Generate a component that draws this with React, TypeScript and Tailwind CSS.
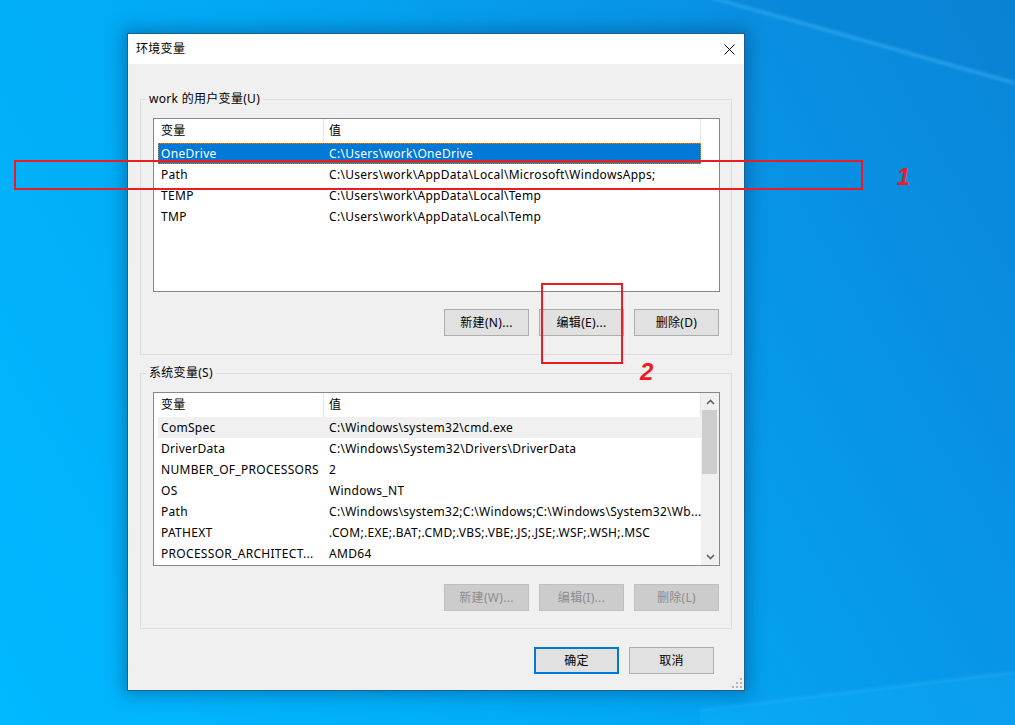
import React from "react";

type Row = [string, string];

const userVars: Row[] = [
  ["OneDrive", "C:\\Users\\work\\OneDrive"],
  ["Path", "C:\\Users\\work\\AppData\\Local\\Microsoft\\WindowsApps;"],
  ["TEMP", "C:\\Users\\work\\AppData\\Local\\Temp"],
  ["TMP", "C:\\Users\\work\\AppData\\Local\\Temp"],
];

const systemVars: Row[] = [
  ["ComSpec", "C:\\Windows\\system32\\cmd.exe"],
  ["DriverData", "C:\\Windows\\System32\\Drivers\\DriverData"],
  ["NUMBER_OF_PROCESSORS", "2"],
  ["OS", "Windows_NT"],
  ["Path", "C:\\Windows\\system32;C:\\Windows;C:\\Windows\\System32\\Wb..."],
  ["PATHEXT", ".COM;.EXE;.BAT;.CMD;.VBS;.VBE;.JS;.JSE;.WSF;.WSH;.MSC"],
  ["PROCESSOR_ARCHITECT...", "AMD64"],
];

function Chevron({ up }: { up?: boolean }) {
  return (
    <svg width="9" height="6" viewBox="0 0 9 6">
      <path
        d={up ? "M1 5 L4.5 1.5 L8 5" : "M1 1 L4.5 4.5 L8 1"}
        fill="none"
        stroke="#606060"
        strokeWidth="1.6"
      />
    </svg>
  );
}

function ScrollBar() {
  return (
    <div className="flex w-[18px] shrink-0 flex-col bg-[#f0f0f0]">
      <div className="flex h-[17px] items-center justify-center">
        <Chevron up />
      </div>
      <div className="flex-1">
        <div className="ml-[1px] h-[64px] w-[15px] bg-[#cdcdcd]" />
      </div>
      <div className="flex h-[17px] items-center justify-center">
        <Chevron />
      </div>
    </div>
  );
}

function ListView({
  rows,
  selected,
  hovered,
  scroll,
}: {
  rows: Row[];
  selected?: number;
  hovered?: number;
  scroll?: boolean;
}) {
  return (
    <div className="flex h-[174px] overflow-hidden border border-[#828790] bg-white">
      <div className="flex w-[547px] shrink-0 flex-col">
        <div className="flex h-[24px] shrink-0">
          <div className="flex w-[170px] items-center border-r border-[#e5e5e5] pl-[7px]">变量</div>
          <div className="flex w-[377px] items-center border-r border-[#e5e5e5] pl-[5px]">值</div>
        </div>
        {rows.map(([name, value], i) => {
          const sel = i === selected;
          const hov = i === hovered;
          return (
            <div
              key={name + i}
              className={`ml-[4px] flex h-[21px] w-[543px] shrink-0 items-center whitespace-nowrap ${
                sel
                  ? "bg-[#0078d7] text-white outline-1 outline-dotted -outline-offset-1 outline-[#d9822b]"
                  : hov
                  ? "bg-[#f0f0f0]"
                  : ""
              }`}
            >
              <div className="w-[165px] shrink-0 overflow-hidden pl-[3px]">{name}</div>
              <div className="overflow-hidden pl-[6px]">{value}</div>
            </div>
          );
        })}
      </div>
      {scroll && <ScrollBar />}
    </div>
  );
}

function Button({
  label,
  disabled,
  primary,
}: {
  label: string;
  disabled?: boolean;
  primary?: boolean;
}) {
  const look = disabled
    ? "border border-[#bfbfbf] bg-[#cccccc] text-[#8c8c8c]"
    : primary
    ? "border-2 border-[#0078d7] bg-[#e1e1e1]"
    : "border border-[#adadad] bg-[#e1e1e1]";
  return (
    <div className={`flex h-[27px] w-[85px] items-center justify-center ${look}`}>{label}</div>
  );
}

function Group({
  title,
  children,
  className,
}: {
  title: string;
  children: React.ReactNode;
  className?: string;
}) {
  return (
    <fieldset className={`border border-[#dcdcdc] pl-3 pr-[11px] pt-[11px] ${className ?? ""}`}>
      <legend className="ml-[-7px] h-[16px] px-[3px] leading-[16px]">{title}</legend>
      {children}
    </fieldset>
  );
}

export default function App() {
  return (
    <div className="relative h-[725px] w-[1015px] overflow-hidden bg-[linear-gradient(60deg,#00b9ff_0%,#02a8f4_45%,#0990e2_80%,#0a86d8_100%)] font-['Noto_Sans','Noto_Sans_CJK_SC',sans-serif] text-[12px] tracking-[0.3px] text-black">
      {/* wallpaper streaks */}
      <svg className="absolute inset-0" width="1015" height="725">
        <defs>
          <filter id="blur">
            <feGaussianBlur stdDeviation="1.4" />
          </filter>
        </defs>
        <polygon points="560,-45 1015,83 1015,0 560,0" fill="#0776c8" opacity="0.25" />
        <line x1="560" y1="-45" x2="1015" y2="83" stroke="#48b6f6" strokeWidth="3" opacity="0.55" filter="url(#blur)" />
        <polygon points="700,710 1015,672 1015,725 700,725" fill="#16b8ff" opacity="0.25" />
        <line x1="700" y1="710" x2="1015" y2="672" stroke="#40bcfa" strokeWidth="2.5" opacity="0.3" filter="url(#blur)" />
      </svg>

      {/* dialog window */}
      <div className="absolute left-[127px] top-[33px] flex h-[658px] w-[618px] flex-col border border-[#1f5f8b] bg-[#f0f0f0] shadow-[0_0_16px_4px_rgba(0,40,90,0.35)]">
        <div className="flex h-[30px] shrink-0 items-center justify-between bg-white pl-[8px] pr-[9px]">
          <span>环境变量</span>
          <svg width="11" height="11" viewBox="0 0 11 11">
            <path d="M0.5 0.5 L10.5 10.5 M10.5 0.5 L0.5 10.5" stroke="#000" strokeWidth="1" />
          </svg>
        </div>

        <div className="flex flex-col px-3">
          <Group title="work 的用户变量(U)" className="mt-[27px] pb-[18px]">
            <ListView rows={userVars} selected={0} />
            <div className="mt-[17px] flex justify-end gap-[10px] pr-[1px]">
              <Button label="新建(N)..." />
              <Button label="编辑(E)..." />
              <Button label="删除(D)" />
            </div>
          </Group>

          <Group title="系统变量(S)" className="mt-[10px] pb-[17px]">
            <ListView rows={systemVars} hovered={0} scroll />
            <div className="mt-[18px] flex justify-end gap-[10px] pr-[1px]">
              <Button label="新建(W)..." disabled />
              <Button label="编辑(I)..." disabled />
              <Button label="删除(L)" disabled />
            </div>
          </Group>

          <div className="mt-[18px] flex justify-end gap-[10px] pr-[18px]">
            <Button label="确定" primary />
            <Button label="取消" />
          </div>
        </div>

        {/* size grip */}
        <svg className="absolute bottom-[2px] right-[2px]" width="10" height="10" viewBox="0 0 10 10">
          <g fill="#b4b4b4">
            <rect x="8" y="0" width="2" height="2" />
            <rect x="4" y="4" width="2" height="2" />
            <rect x="8" y="4" width="2" height="2" />
            <rect x="0" y="8" width="2" height="2" />
            <rect x="4" y="8" width="2" height="2" />
            <rect x="8" y="8" width="2" height="2" />
          </g>
        </svg>
      </div>

      {/* red annotations */}
      <div className="absolute left-[14px] top-[160px] h-[30px] w-[849px] border-2 border-[#ec1c24]" />
      <span className="absolute left-[897px] top-[166px] font-['Liberation_Sans',sans-serif] text-[23px] font-bold italic leading-none tracking-normal text-[#ec1c24]">
        1
      </span>
      <div className="absolute left-[541px] top-[283px] h-[81px] w-[82px] border-2 border-[#ec1c24]" />
      <span className="absolute left-[640px] top-[360px] font-['Liberation_Sans',sans-serif] text-[24px] font-bold italic leading-none tracking-normal text-[#ec1c24]">
        2
      </span>
    </div>
  );
}
